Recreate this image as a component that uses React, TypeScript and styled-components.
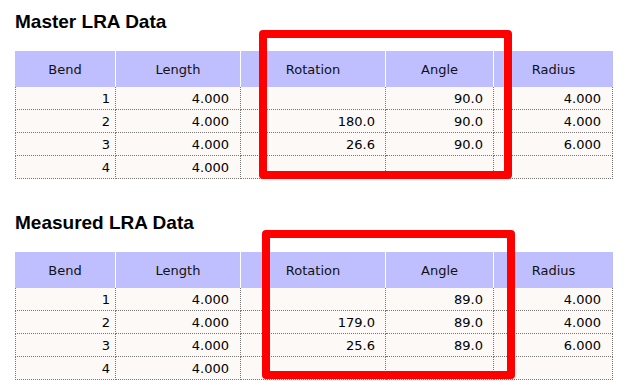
import React from "react";
import styled, { createGlobalStyle } from "styled-components";

const GlobalStyle = createGlobalStyle`
  body {
    margin: 0;
    background: #ffffff;
  }
`;

const Page = styled.div`
  padding: 11px 0 0 15px;
`;

const Section = styled.section<{ $gap?: number }>`
  margin-top: ${(p) => p.$gap ?? 0}px;
`;

const Title = styled.h2`
  margin: 0 0 18px 0;
  font-family: "Liberation Sans", Arial, sans-serif;
  font-size: 19px;
  font-weight: bold;
  line-height: 22px;
  color: #000;
`;

const TableWrap = styled.div`
  position: relative;
  width: 598px;
`;

const Table = styled.table`
  width: 598px;
  table-layout: fixed;
  border-collapse: separate;
  border-spacing: 0;
  font-family: "DejaVu Sans", Verdana, sans-serif;
  font-size: 13px;
`;

const Th = styled.th`
  height: 36px;
  padding: 0;
  background: #bfbfff;
  color: #111;
  font-weight: normal;
  text-align: center;
  border-right: 1px solid #ffffff;

  &:last-child {
    border-right: none;
  }
`;

const Td = styled.td<{ $pad: number }>`
  height: 22px;
  padding: 0 ${(p) => p.$pad}px 0 0;
  background: #fdf9f7;
  color: #000;
  text-align: right;
  border-right: 1px dotted #777;
  border-bottom: 1px dotted #777;

  &:first-child {
    border-left: 1px dotted #777;
  }
`;

const Highlight = styled.div<{ $top: number; $left: number; $w: number; $h: number }>`
  position: absolute;
  top: ${(p) => p.$top}px;
  left: ${(p) => p.$left}px;
  width: ${(p) => p.$w}px;
  height: ${(p) => p.$h}px;
  box-sizing: border-box;
  border: 8px solid #ff0000;
  border-radius: 4px;
  pointer-events: none;
`;

type Row = [string, string, string, string, string];

const columns = [
  { name: "Bend", width: 101, pad: 5 },
  { name: "Length", width: 125, pad: 11 },
  { name: "Rotation", width: 145, pad: 10 },
  { name: "Angle", width: 108, pad: 10 },
  { name: "Radius", width: 119, pad: 11 },
];

const master: Row[] = [
  ["1", "4.000", "", "90.0", "4.000"],
  ["2", "4.000", "180.0", "90.0", "4.000"],
  ["3", "4.000", "26.6", "90.0", "6.000"],
  ["4", "4.000", "", "", ""],
];

const measured: Row[] = [
  ["1", "4.000", "", "89.0", "4.000"],
  ["2", "4.000", "179.0", "89.0", "4.000"],
  ["3", "4.000", "25.6", "89.0", "6.000"],
  ["4", "4.000", "", "", ""],
];

const LraTable = ({ rows, boxTop, boxLeft }: { rows: Row[]; boxTop: number; boxLeft: number }) => (
  <TableWrap>
    <Table>
      <colgroup>
        {columns.map((c) => (
          <col key={c.name} style={{ width: c.width }} />
        ))}
      </colgroup>
      <thead>
        <tr>
          {columns.map((c) => (
            <Th key={c.name}>{c.name}</Th>
          ))}
        </tr>
      </thead>
      <tbody>
        {rows.map((r) => (
          <tr key={r[0]}>
            {r.map((v, i) => (
              <Td key={i} $pad={columns[i].pad}>
                {v}
              </Td>
            ))}
          </tr>
        ))}
      </tbody>
    </Table>
    <Highlight $top={boxTop} $left={boxLeft} $w={253} $h={149} />
  </TableWrap>
);

const App = () => (
  <>
    <GlobalStyle />
    <Page>
      <Section>
        <Title>Master LRA Data</Title>
        <LraTable rows={master} boxTop={-21} boxLeft={244} />
      </Section>
      <Section $gap={33}>
        <Title>Measured LRA Data</Title>
        <LraTable rows={measured} boxTop={-22} boxLeft={247} />
      </Section>
    </Page>
  </>
);

export default App;
